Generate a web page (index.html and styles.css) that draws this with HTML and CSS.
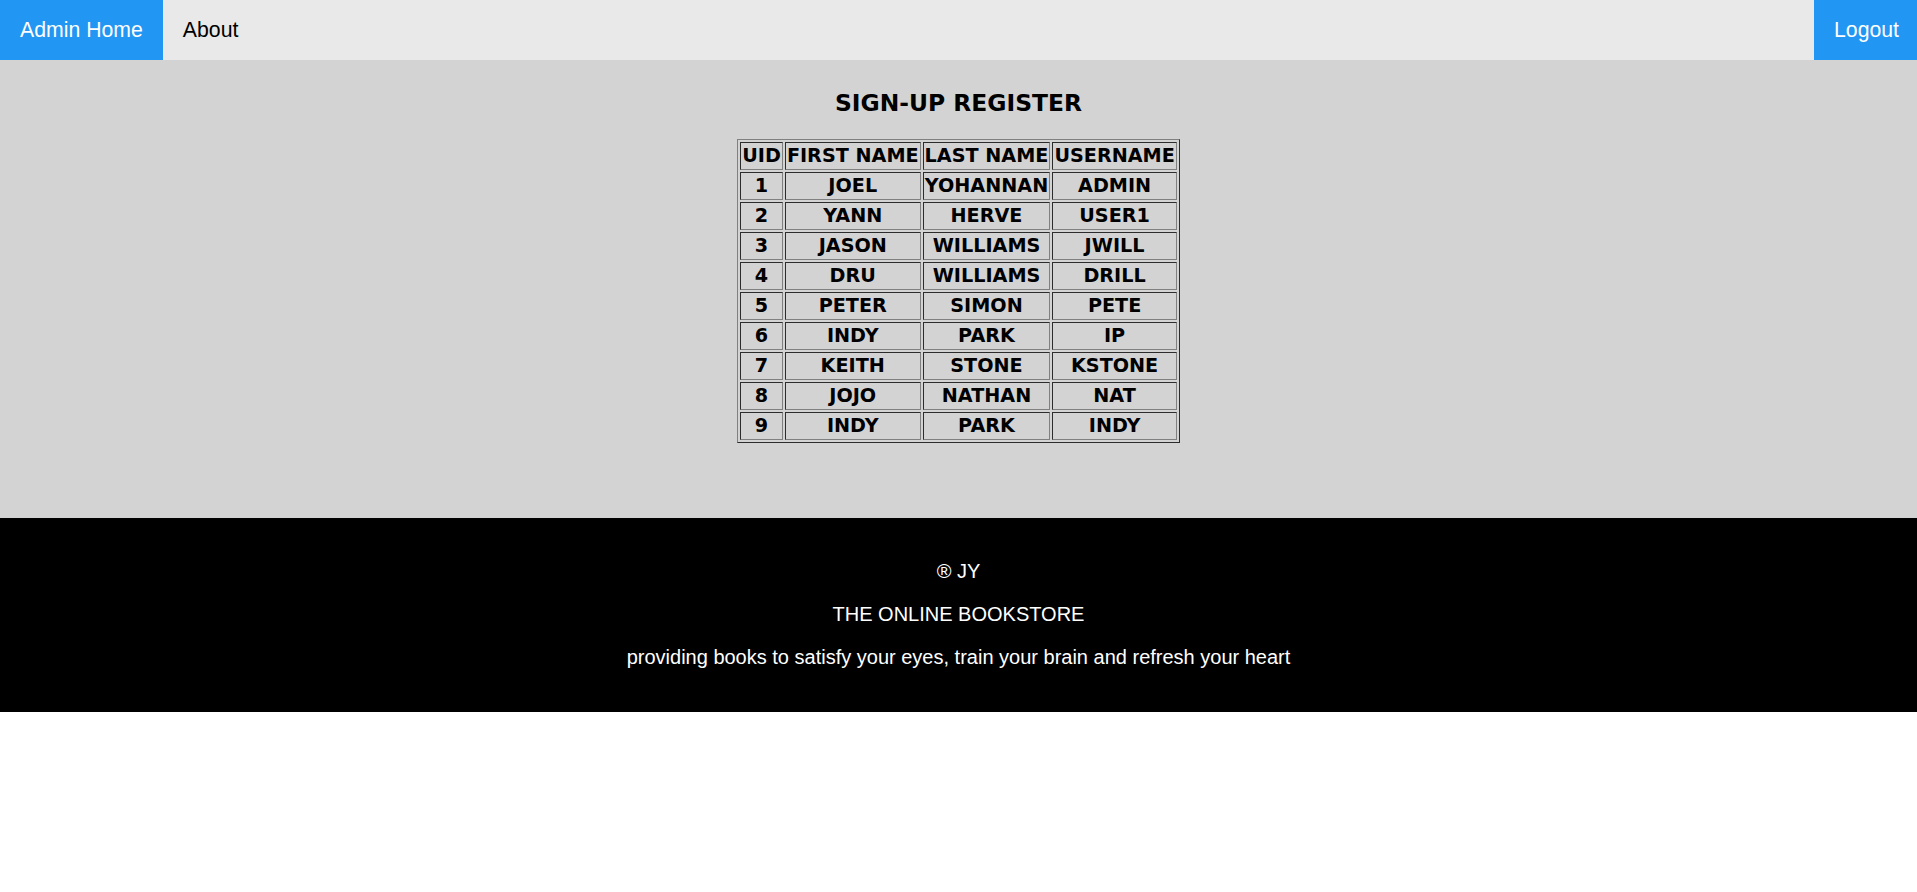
FILE: index.html
```html
<!DOCTYPE html>
<html>
<head>
<meta charset="utf-8">
<title>Sign-up Register</title>
<link rel="stylesheet" href="styles.css">
</head>
<body>
<nav class="topnav">
  <a class="nav-link active" href="#">Admin Home</a>
  <a class="nav-link" href="#">About</a>
  <a class="nav-link active logout" href="#">Logout</a>
</nav>
<main class="content">
  <h3 class="title">SIGN-UP REGISTER</h3>
  <table class="register">
    <tr><th>UID</th><th>FIRST NAME</th><th>LAST NAME</th><th>USERNAME</th></tr>
    <tr><td>1</td><td>JOEL</td><td>YOHANNAN</td><td>ADMIN</td></tr>
    <tr><td>2</td><td>YANN</td><td>HERVE</td><td>USER1</td></tr>
    <tr><td>3</td><td>JASON</td><td>WILLIAMS</td><td>JWILL</td></tr>
    <tr><td>4</td><td>DRU</td><td>WILLIAMS</td><td>DRILL</td></tr>
    <tr><td>5</td><td>PETER</td><td>SIMON</td><td>PETE</td></tr>
    <tr><td>6</td><td>INDY</td><td>PARK</td><td>IP</td></tr>
    <tr><td>7</td><td>KEITH</td><td>STONE</td><td>KSTONE</td></tr>
    <tr><td>8</td><td>JOJO</td><td>NATHAN</td><td>NAT</td></tr>
    <tr><td>9</td><td>INDY</td><td>PARK</td><td>INDY</td></tr>
  </table>
</main>
<footer class="footer">
  <p>® JY</p>
  <p>THE ONLINE BOOKSTORE</p>
  <p>providing books to satisfy your eyes, train your brain and refresh your heart</p>
</footer>
</body>
</html>
```

FILE: styles.css
```css
html, body {
  margin: 0;
  padding: 0;
  background: #ffffff;
}

.topnav {
  display: flex;
  background: #e9e9e9;
  height: 60px;
  font-family: "Liberation Sans", Arial, sans-serif;
}

.nav-link {
  display: block;
  color: #000000;
  text-decoration: none;
  font-size: 21.25px;
  line-height: 60px;
  padding: 0 20px;
}

.nav-link.active {
  background: #2196f3;
  color: #ffffff;
}

.logout {
  margin-left: auto;
  padding: 0 18px 0 20px;
}

.content {
  background: #d3d3d3;
  padding: 30px 0 75px;
  display: flex;
  flex-direction: column;
  align-items: center;
  font-family: Verdana, "DejaVu Sans", sans-serif;
}

.title {
  margin: 0 0 22px;
  font-size: 23.4px;
  line-height: 27px;
  font-weight: bold;
  color: #000;
}

.register {
  border: 1px outset #808080;
  border-spacing: 2px;
  font-size: 19.2px;
  font-weight: bold;
  text-align: center;
}

.register th,
.register td {
  border: 1px inset #808080;
  padding: 1px 1px;
  line-height: 24px;
  font-weight: bold;
}

.footer {
  background: #000000;
  color: #ffffff;
  font-family: "Liberation Sans", Arial, sans-serif;
  font-size: 20px;
  line-height: 23px;
  text-align: center;
  padding: 22px 0 23px;
}

.footer p {
  margin: 20px 0;
}
```
